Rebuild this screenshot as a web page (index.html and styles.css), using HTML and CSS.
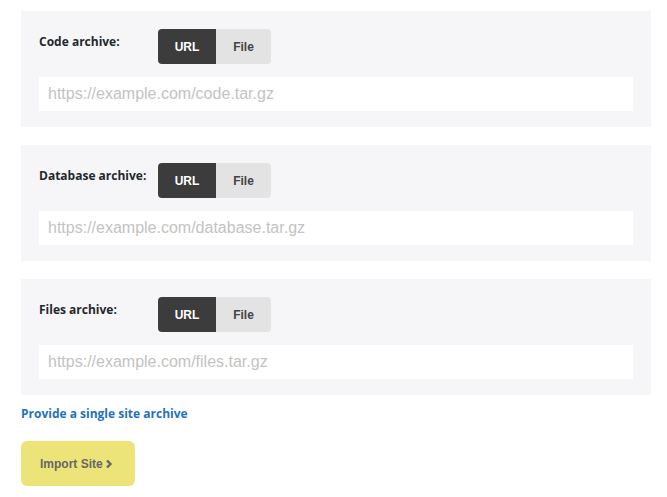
FILE: index.html
```html
<!DOCTYPE html>
<html>
<head>
<meta charset="utf-8">
<link rel="stylesheet" href="styles.css">
</head>
<body>
<div class="wrap">
  <div class="panels">
    <div class="panel">
      <div class="row">
        <div class="label">Code archive:</div>
        <div class="toggle"><span class="seg on">URL</span><span class="seg off">File</span></div>
      </div>
      <div class="field">https://example.com/code.tar.gz</div>
    </div>
    <div class="panel">
      <div class="row">
        <div class="label">Database archive:</div>
        <div class="toggle"><span class="seg on">URL</span><span class="seg off">File</span></div>
      </div>
      <div class="field">https://example.com/database.tar.gz</div>
    </div>
    <div class="panel">
      <div class="row">
        <div class="label">Files archive:</div>
        <div class="toggle"><span class="seg on">URL</span><span class="seg off">File</span></div>
      </div>
      <div class="field">https://example.com/files.tar.gz</div>
    </div>
  </div>
  <a class="link" href="#">Provide a single site archive</a>
  <div class="btn">Import Site<svg class="chev" width="8" height="10" viewBox="0 0 8 10"><polyline points="2,1.5 5.5,5 2,8.5" fill="none" stroke="#666" stroke-width="2.4"/></svg></div>
</div>
</body>
</html>
```

FILE: styles.css
```css
html, body {
  margin: 0;
  padding: 0;
  background: #ffffff;
}
.wrap {
  padding: 11px 16px 0 21px;
  display: flex;
  flex-direction: column;
  align-items: flex-start;
}
.panels {
  display: flex;
  flex-direction: column;
  gap: 18px;
  align-self: stretch;
}
.panel {
  background: #f6f6f8;
  padding: 18px 18px 16px 18px;
}
.row {
  display: flex;
  align-items: flex-start;
}
.label {
  width: 119px;
  padding-top: 1px;
  font-family: "Open Sans", sans-serif;
  font-weight: 700;
  font-size: 12px;
  line-height: 24px;
  color: #23282d;
}
.toggle {
  display: flex;
  height: 35px;
  border-radius: 4px;
  overflow: hidden;
}
.seg {
  display: flex;
  align-items: center;
  justify-content: center;
  font-family: "Liberation Sans", Arial, sans-serif;
  font-weight: 700;
  font-size: 12px;
}
.seg.on {
  width: 58px;
  background: #3c3c3c;
  color: #ffffff;
}
.seg.off {
  width: 55px;
  background: #e3e3e3;
  color: #444444;
}
.field {
  margin-top: 13px;
  height: 34px;
  background: #ffffff;
  padding-left: 9px;
  font-family: "Liberation Sans", Arial, sans-serif;
  font-size: 16px;
  line-height: 34px;
  color: #c3c3c3;
}
.link {
  margin-top: 10px;
  font-family: "Open Sans", sans-serif;
  font-weight: 700;
  font-size: 12px;
  line-height: 18px;
  color: #1e73be;
  text-decoration: none;
}
.btn {
  margin-top: 18px;
  width: 95px;
  height: 45px;
  padding-left: 19px;
  box-sizing: content-box;
  background: #ede479;
  border-radius: 6px;
  display: flex;
  align-items: center;
  font-family: "Liberation Sans", Arial, sans-serif;
  font-weight: 700;
  font-size: 12px;
  color: #666666;
}
.chev {
  margin-left: 2px;
}
```
